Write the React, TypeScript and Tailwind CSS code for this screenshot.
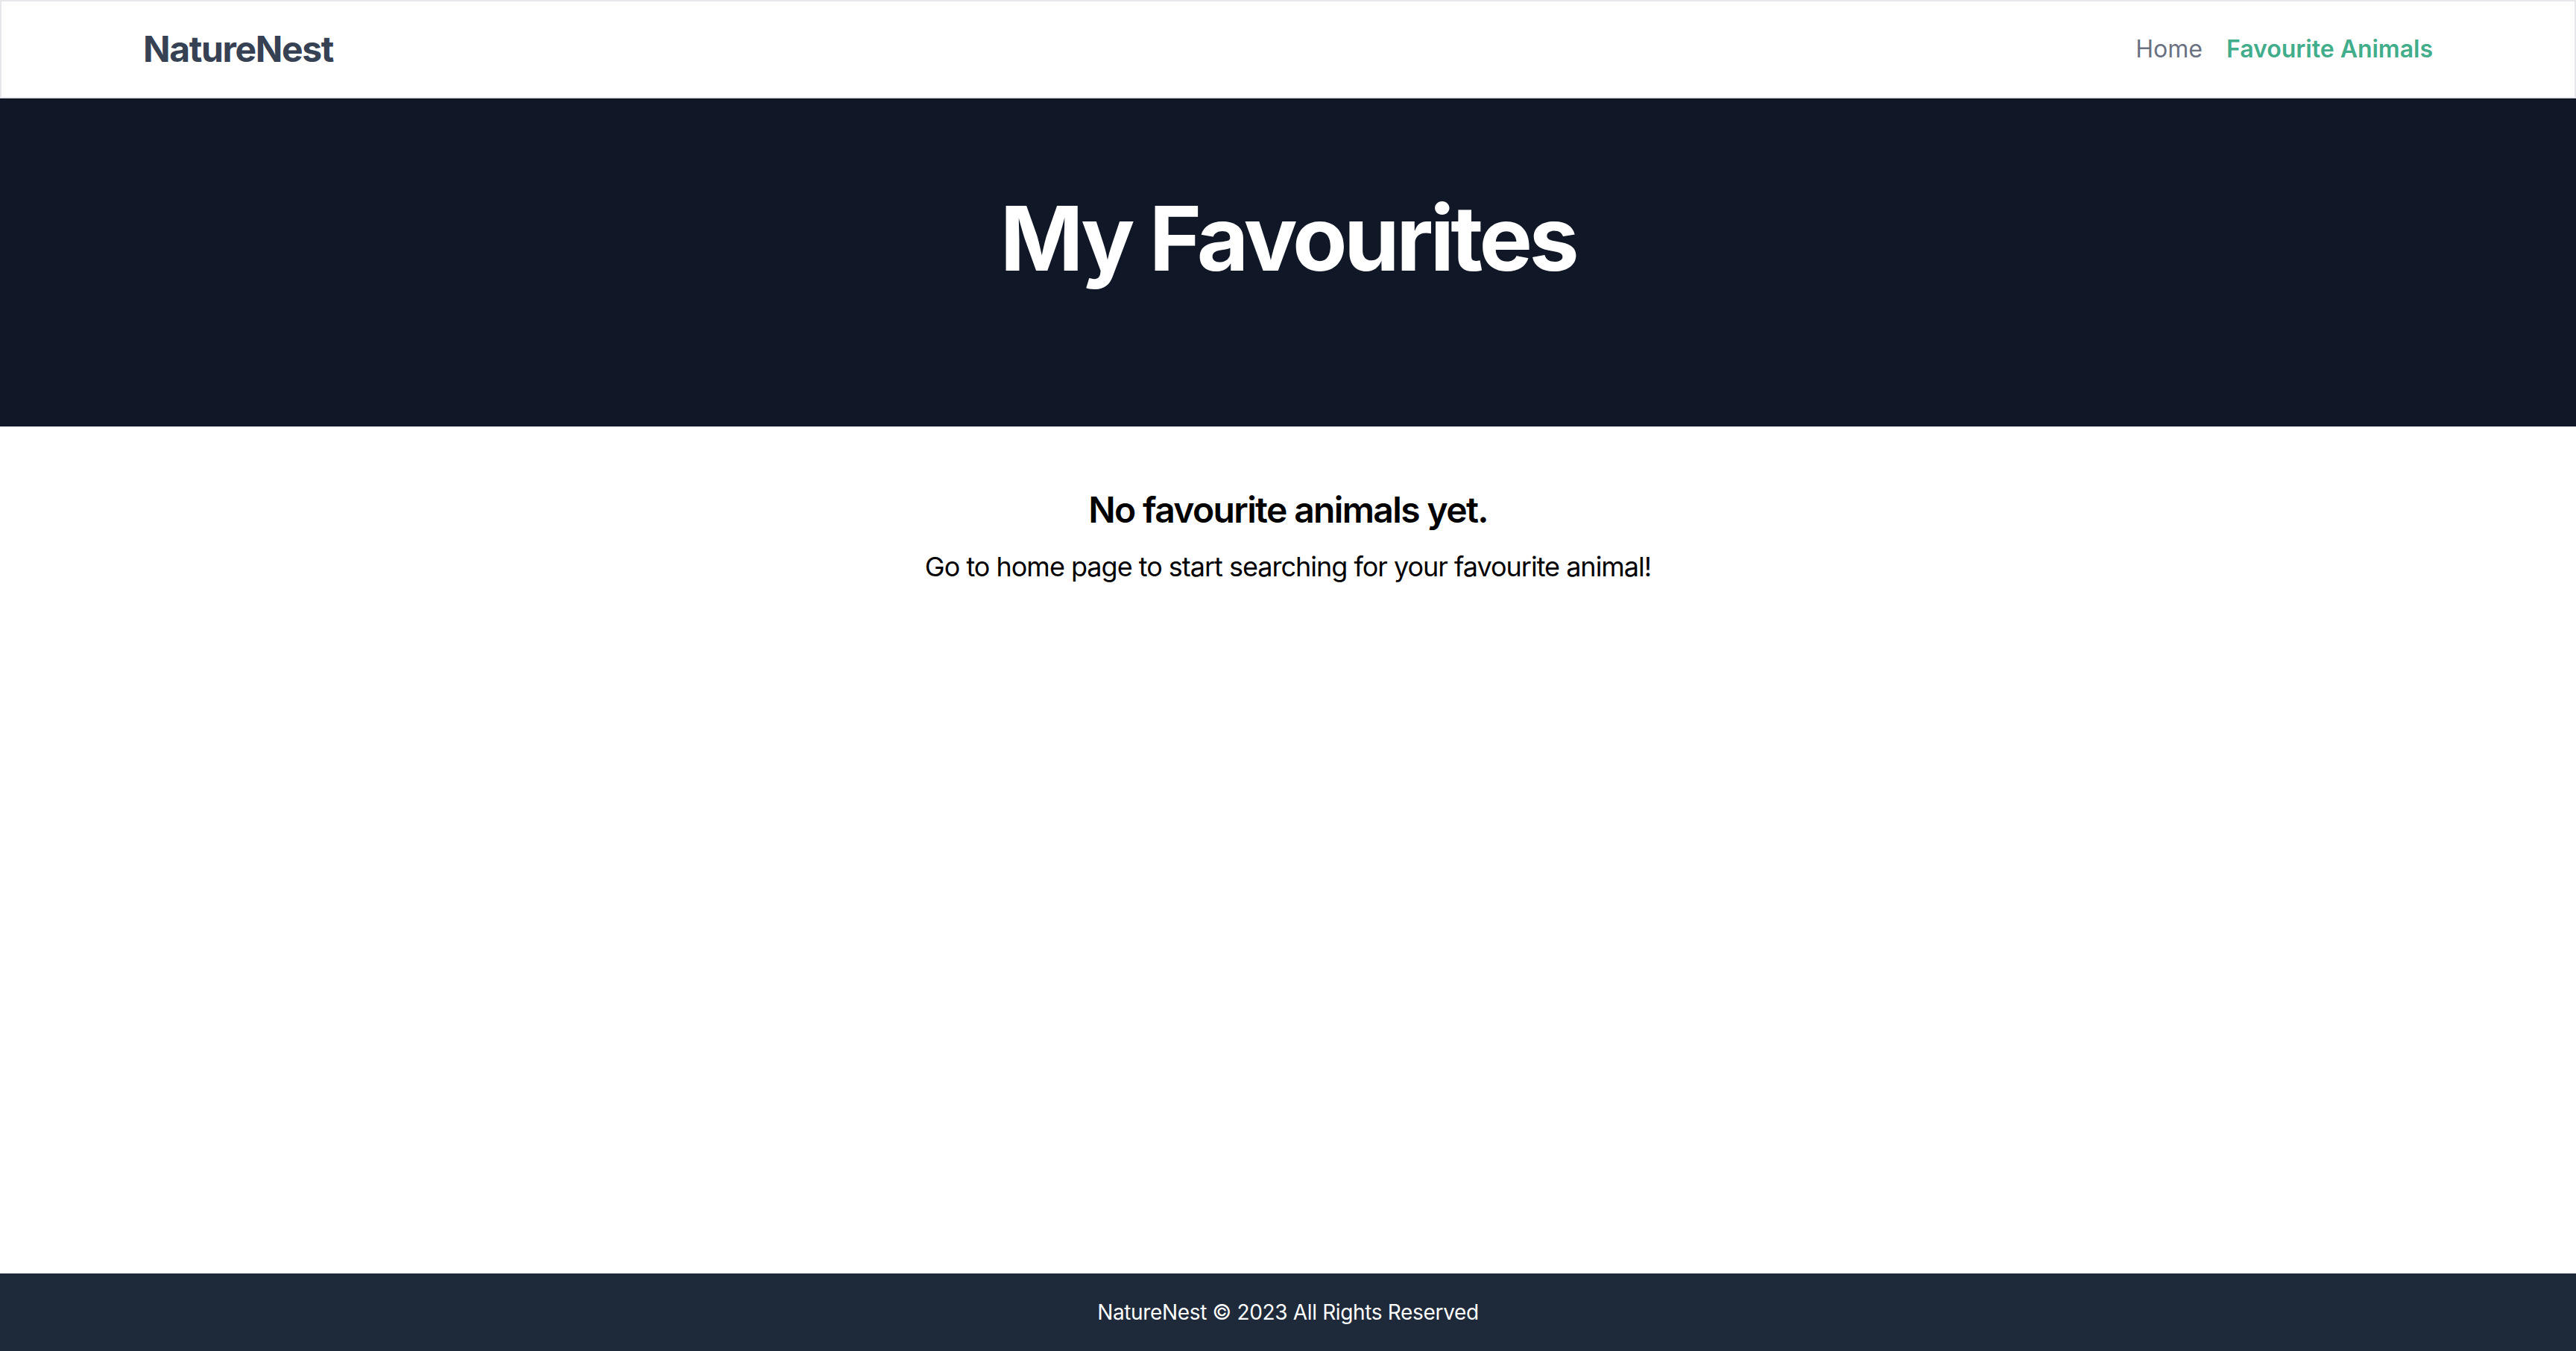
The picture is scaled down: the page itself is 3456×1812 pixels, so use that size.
import React from 'react';

const font = { fontFamily: 'Inter, "Noto Sans", "Liberation Sans", sans-serif' };

function Header() {
  return (
    <header className="h-[132px] bg-white border-2 border-gray-200">
      <div className="max-w-[3072px] mx-auto h-full flex items-center justify-between">
        <a href="#" className="text-[48px] leading-[64px] font-bold tracking-[-0.028em] text-gray-700 no-underline">
          NatureNest
        </a>
        <nav className="flex items-center gap-[32px] text-[32px] leading-[48px]">
          <a href="#" className="text-gray-500 no-underline">
            Home
          </a>
          <a href="#" className="font-semibold text-[#41ad8a] no-underline">
            Favourite Animals
          </a>
        </nav>
      </div>
    </header>
  );
}

function Hero() {
  return (
    <section className="bg-gray-900 py-[128px] text-center">
      <h1 className="text-[120px] leading-none font-bold tracking-[-0.038em] text-white mb-[64px]">
        My Favourites
      </h1>
    </section>
  );
}

function EmptyState() {
  return (
    <main className="flex-1 pt-[80px] text-center text-black">
      <h2 className="text-[48px] leading-[64px] font-semibold tracking-[-0.034em] mb-[16px]">
        No favourite animals yet.
      </h2>
      <p className="text-[36px] leading-[56px] tracking-[-0.028em]">
        Go to home page to start searching for your favourite animal!
      </p>
    </main>
  );
}

function Footer() {
  return (
    <footer className="bg-gray-800 py-[32px] text-center">
      <p className="text-[28px] leading-[40px] tracking-[-0.012em] text-white">NatureNest © 2023 All Rights Reserved</p>
    </footer>
  );
}

export default function App() {
  return (
    <div className="min-h-screen flex flex-col bg-white" style={font}>
      <Header />
      <Hero />
      <EmptyState />
      <Footer />
    </div>
  );
}
